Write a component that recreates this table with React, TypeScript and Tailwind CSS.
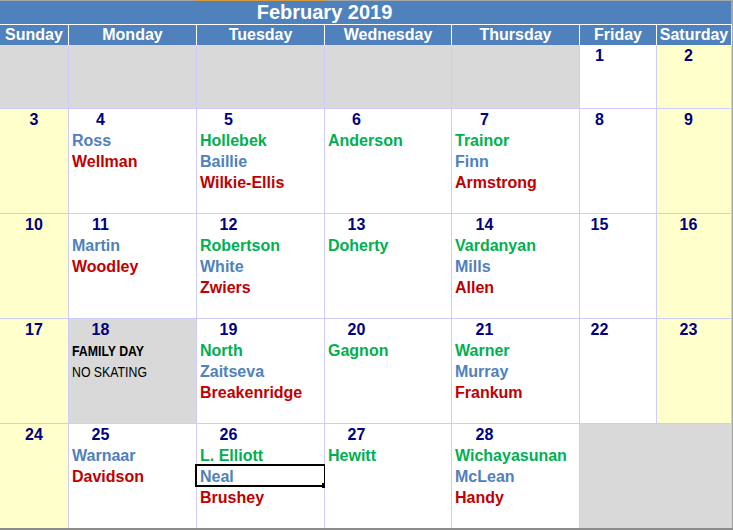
import React from 'react';

type Tone = 'blue' | 'green' | 'red';

interface Entry {
  name: string;
  tone: Tone;
}

interface Day {
  date?: number;
  entries?: Entry[];
  note?: boolean; // holiday cell (Family Day)
  selected?: string; // name inside the active cell box
  bg: 'white' | 'gray' | 'yellow';
  span?: number;
}

// Widths of the first sub-column of each day, used to center the date number
const DATE_WIDTHS = [68, 63, 63, 63, 65, 39, 63];
const DAY_NAMES = ['Sunday', 'Monday', 'Tuesday', 'Wednesday', 'Thursday', 'Friday', 'Saturday'];

const toneClass: Record<Tone, string> = {
  blue: 'text-[#4f81bd]',
  green: 'text-[#00b050]',
  red: 'text-[#c00000]',
};

const bgClass = {
  white: 'bg-white',
  gray: 'bg-[#d9d9d9]',
  yellow: 'bg-[#ffffcc]',
};

const b = (name: string): Entry => ({ name, tone: 'blue' });
const g = (name: string): Entry => ({ name, tone: 'green' });
const r = (name: string): Entry => ({ name, tone: 'red' });

const weeks: Day[][] = [
  [
    { bg: 'gray' },
    { bg: 'gray' },
    { bg: 'gray' },
    { bg: 'gray' },
    { bg: 'gray' },
    { date: 1, bg: 'white' },
    { date: 2, bg: 'yellow' },
  ],
  [
    { date: 3, bg: 'yellow' },
    { date: 4, bg: 'white', entries: [b('Ross'), r('Wellman')] },
    { date: 5, bg: 'white', entries: [g('Hollebek'), b('Baillie'), r('Wilkie-Ellis')] },
    { date: 6, bg: 'white', entries: [g('Anderson')] },
    { date: 7, bg: 'white', entries: [g('Trainor'), b('Finn'), r('Armstrong')] },
    { date: 8, bg: 'white' },
    { date: 9, bg: 'yellow' },
  ],
  [
    { date: 10, bg: 'yellow' },
    { date: 11, bg: 'white', entries: [b('Martin'), r('Woodley')] },
    { date: 12, bg: 'white', entries: [g('Robertson'), b('White'), r('Zwiers')] },
    { date: 13, bg: 'white', entries: [g('Doherty')] },
    { date: 14, bg: 'white', entries: [g('Vardanyan'), b('Mills'), r('Allen')] },
    { date: 15, bg: 'white' },
    { date: 16, bg: 'yellow' },
  ],
  [
    { date: 17, bg: 'yellow' },
    { date: 18, bg: 'gray', note: true },
    { date: 19, bg: 'white', entries: [g('North'), b('Zaitseva'), r('Breakenridge')] },
    { date: 20, bg: 'white', entries: [g('Gagnon')] },
    { date: 21, bg: 'white', entries: [g('Warner'), b('Murray'), r('Frankum')] },
    { date: 22, bg: 'white' },
    { date: 23, bg: 'yellow' },
  ],
  [
    { date: 24, bg: 'yellow' },
    { date: 25, bg: 'white', entries: [b('Warnaar'), r('Davidson')] },
    { date: 26, bg: 'white', entries: [g('L. Elliott'), b('Neal'), r('Brushey')], selected: 'Neal' },
    { date: 27, bg: 'white', entries: [g('Hewitt')] },
    { date: 28, bg: 'white', entries: [g('Wichayasunan'), b('McLean'), r('Handy')] },
    { bg: 'gray', span: 2 },
  ],
];

const COLS = 'grid-cols-[68px_127px_127px_126px_127px_76px_74px]';

function DayCell({ day, col }: { day: Day; col: number }) {
  return (
    <div
      className={`relative ${bgClass[day.bg]} ${day.span === 2 ? 'col-span-2' : ''}`}
    >
      {day.date !== undefined && (
        <div
          className="h-[21px] text-center text-[16px] font-bold leading-[21px] text-[#000080]"
          style={{ width: DATE_WIDTHS[col] }}
        >
          {day.date}
        </div>
      )}

      {/* Names, one per line */}
      {day.entries?.map((e) => (
        <div
          key={e.name}
          className={`relative h-[21px] whitespace-nowrap pl-[3px] text-[16px] font-bold leading-[21px] ${toneClass[e.tone]}`}
        >
          {e.name}
          {day.selected === e.name && (
            <>
              <div className="absolute left-[-2px] top-[-2px] h-[23px] w-[131px] border-2 border-black" />
              <div className="absolute left-[125px] top-[17px] h-[5px] w-[5px] bg-black" />
            </>
          )}
        </div>
      ))}

      {/* Holiday note */}
      {day.note && (
        <div className="pl-[3px] text-[15px] leading-[21px] text-black">
          <div className="h-[21px] whitespace-nowrap">
            <span className="inline-block origin-left scale-x-[0.82] font-bold">FAMILY DAY</span>
          </div>
          <div className="h-[21px] whitespace-nowrap">
            <span className="inline-block origin-left scale-x-[0.82]">NO SKATING</span>
          </div>
        </div>
      )}
    </div>
  );
}

export default function App() {
  return (
    <div className="h-[530px] w-[733px] overflow-hidden bg-[#a6a6a6] font-['Liberation_Sans',Arial,sans-serif]">
      {/* Top edge, active column marked in orange */}
      <div className="flex h-px">
        <div className="w-[196px] bg-[#a6a6a6]" />
        <div className="w-[129px] bg-[#d69a3c]" />
        <div className="flex-1 bg-[#a6a6a6]" />
      </div>

      {/* Title */}
      <div className="h-[23px] w-[731px] bg-[#4f81bd]">
        <div className="w-[649px] text-center text-[20px] font-bold leading-[23px] text-white">
          February 2019
        </div>
      </div>

      {/* Weekday headers */}
      <div className={`grid w-[732px] ${COLS} gap-px border-t border-white bg-white pr-px`}>
        {DAY_NAMES.map((d) => (
          <div
            key={d}
            className="h-[20px] bg-[#4f81bd] text-center text-[16px] font-bold leading-[20px] text-white"
          >
            {d}
          </div>
        ))}
      </div>

      {/* Calendar grid */}
      <div
        className={`grid w-[732px] ${COLS} grid-rows-[63px_104px_104px_104px_104px] gap-px bg-[#ccccff] pr-px`}
      >
        {weeks.map((week, wi) =>
          week.map((day, di) => <DayCell key={`${wi}-${di}`} day={day} col={di} />)
        )}
      </div>

      {/* Bottom sheet edge */}
      <div className="h-[2px] bg-[#8c8c8c]" />
    </div>
  );
}
